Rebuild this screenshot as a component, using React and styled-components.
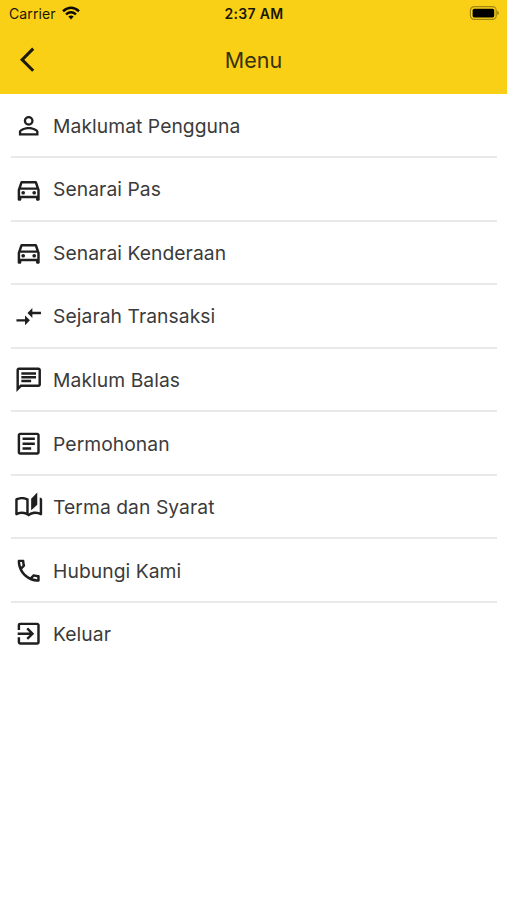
import React from 'react';
import styled, {createGlobalStyle} from 'styled-components';
import {
    MdArrowBackIos,
    MdPersonOutline,
    MdOutlineDirectionsCar,
    MdOutlineCompareArrows,
    MdOutlineChat,
    MdOutlineArticle,
    MdOutlineAutoStories,
    MdOutlinePhone,
    MdOutlineExitToApp
} from 'react-icons/md';

const GlobalStyle = createGlobalStyle`
    body {
        margin: 0;
        background: #ffffff;
        font-family: Inter, "Liberation Sans", sans-serif;
    }
`

const Screen = styled.div`
    min-height: 900px;
    background: #ffffff;
`

const Header = styled.header`
    height: 94px;
    background: #fad017;
`

const StatusBar = styled.div`
    display: grid;
    grid-template-columns: 1fr auto 1fr;
    align-items: center;
    height: 27px;
    padding: 0 8px 0 9px;
    color: #1b1705;
`

const Carrier = styled.div`
    display: flex;
    align-items: center;
    gap: 6px;
    font-size: 14px;
    letter-spacing: 0.1px;

    svg {
        margin-top: -2px;
    }
`

const Clock = styled.div`
    font-size: 14px;
    font-weight: 600;
    letter-spacing: 0.3px;
`

const BatterySlot = styled.div`
    display: flex;
    justify-content: flex-end;

    svg {
        margin-top: -1px;
    }
`

const TitleBar = styled.div`
    display: grid;
    grid-template-columns: 1fr auto 1fr;
    align-items: center;
    height: 66px;
    padding: 0 20px;
`

const BackButton = styled.button`
    display: flex;
    justify-self: start;
    padding: 0;
    border: 0;
    background: none;
    color: #1f1b0b;
    font-size: 29.4px;
`

const Title = styled.h1`
    margin: 0;
    color: #3a310f;
    font-size: 21.5px;
    font-weight: 400;
    letter-spacing: 0;
`

const MenuList = styled.ul`
    margin: 0;
    padding: 0.5px 10px 0 11px;
    list-style: none;
`

const MenuItem = styled.li`
    display: flex;
    align-items: center;
    box-sizing: border-box;
    height: 63.55px;
    gap: 10px;
    padding: 1px 0 0 2.7px;
    border-bottom: 2px solid #e9e9e9;
    color: #3b3b3b;
    font-size: 19.3px;
    letter-spacing: 0.05px;

    &:last-child {
        border-bottom-color: transparent;
    }

    svg {
        flex: none;
        color: #1f1f1f;
        font-size: 29.4px;
    }
`

const items = [
    {label: 'Maklumat Pengguna', icon: MdPersonOutline},
    {label: 'Senarai Pas', icon: MdOutlineDirectionsCar},
    {label: 'Senarai Kenderaan', icon: MdOutlineDirectionsCar},
    {label: 'Sejarah Transaksi', icon: MdOutlineCompareArrows},
    {label: 'Maklum Balas', icon: MdOutlineChat},
    {label: 'Permohonan', icon: MdOutlineArticle},
    {label: 'Terma dan Syarat', icon: MdOutlineAutoStories},
    {label: 'Hubungi Kami', icon: MdOutlinePhone},
    {label: 'Keluar', icon: MdOutlineExitToApp}
];

const WifiIcon = () => (
    <svg width="18" height="14" viewBox="0 0 18 14" fill="none" stroke="#0d0b02" strokeWidth="2.5">
        <path d="M1 5.2Q9 -1.6 17 5.2" />
        <path d="M4 8.4Q9 4.2 14 8.4" />
        <path d="M6.3 10.6Q9 8.4 11.7 10.6L9 13.4Z" fill="#0d0b02" stroke="none" />
    </svg>
);

const BatteryIcon = () => (
    <svg width="30" height="14" viewBox="0 0 30 14">
        <rect x="1.4" y="0.6" width="25.8" height="12.8" rx="3.8" fill="none" stroke="#a18710" strokeWidth="1.2" />
        <rect x="3.6" y="2.8" width="21.6" height="8.6" rx="1.6" fill="#000000" />
        <path d="M28.2 4.8Q30 5.5 30 7T28.2 9.2Z" fill="#a18710" />
    </svg>
);

class App extends React.Component {
    render() {
        return (
            <Screen>
                <GlobalStyle />
                <Header>
                    <StatusBar>
                        <Carrier>
                            Carrier
                            <WifiIcon />
                        </Carrier>
                        <Clock>2:37 AM</Clock>
                        <BatterySlot>
                            <BatteryIcon />
                        </BatterySlot>
                    </StatusBar>
                    <TitleBar>
                        <BackButton aria-label="Kembali">
                            <MdArrowBackIos />
                        </BackButton>
                        <Title>Menu</Title>
                    </TitleBar>
                </Header>
                <MenuList>
                    {items.map(({label, icon: Icon}) => (
                        <MenuItem key={label}>
                            <Icon />
                            {label}
                        </MenuItem>
                    ))}
                </MenuList>
            </Screen>
        );
    }
}

export default App;
